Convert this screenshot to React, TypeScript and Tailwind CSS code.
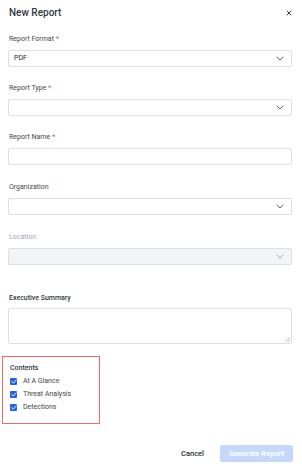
import React from 'react'

function Chevron({ light = false }: { light?: boolean }) {
  return (
    <svg width="8" height="5" viewBox="0 0 8 5" className="shrink-0">
      <path
        d="M1 1 L4 4 L7 1"
        fill="none"
        stroke={light ? '#a0a4ab' : '#4a4f57'}
        strokeWidth="0.9"
        strokeLinecap="round"
        strokeLinejoin="round"
      />
    </svg>
  )
}

function Label({ text, required = false, muted = false }: { text: string; required?: boolean; muted?: boolean }) {
  return (
    <div className={`h-[10px] pl-[1px] text-[7px] leading-[10px] ${muted ? 'text-[#a5a8ad]' : 'text-[#44474d]'}`}>
      {text}
      {required && <span className="ml-[2px] text-[#e5484d]">*</span>}
    </div>
  )
}

function Select({ value = '', disabled = false }: { value?: string; disabled?: boolean }) {
  return (
    <div
      className={`mt-[6px] flex h-[17px] items-center justify-between rounded-[2px] border border-[#dcdfe3] pl-[5px] pr-[7px] text-[7px] text-[#2a2d33] ${
        disabled ? 'bg-[#f3f4f6]' : 'bg-white'
      }`}
    >
      <span>{value}</span>
      <Chevron light={disabled} />
    </div>
  )
}

function Check({ label }: { label: string }) {
  return (
    <div className="flex h-[13px] items-center gap-[6px]">
      <span className="flex h-[7px] w-[7px] items-center justify-center rounded-[1px] bg-[#2563eb]">
        <svg width="6" height="5" viewBox="0 0 6 5">
          <path d="M0.8 2.6 L2.3 4 L5.2 0.9" fill="none" stroke="white" strokeWidth="0.9" strokeLinecap="round" strokeLinejoin="round" />
        </svg>
      </span>
      <span className="text-[7px] text-[#44474d]">{label}</span>
    </div>
  )
}

export default function App() {
  return (
    <div className="h-[468px] w-[302px] bg-white" style={{ fontFamily: 'Roboto, "Noto Sans", sans-serif' }}>
      {/* Header */}
      <div className="flex h-[25px] items-center justify-between pl-[9px] pr-[10px]">
        <h1 className="text-[10px] font-medium text-[#333840]">New Report</h1>
        <svg width="6" height="6" viewBox="0 0 6 6">
          <path d="M1 1 L5 5 M5 1 L1 5" stroke="#3a3e45" strokeWidth="1" strokeLinecap="round" />
        </svg>
      </div>

      <div className="flex flex-col gap-[16px] pl-[8px] pr-[10px] pt-[9px]">
        <div>
          <Label text="Report Format" required />
          <Select value="PDF" />
        </div>

        <div>
          <Label text="Report Type" required />
          <Select />
        </div>

        <div className="mb-[1px]">
          <Label text="Report Name" required />
          <div className="mt-[6px] h-[17px] rounded-[2px] border border-[#dcdfe3] bg-white" />
        </div>

        <div className="mb-[1px]">
          <Label text="Organization" />
          <Select />
        </div>

        <div className="mb-[12px]">
          <Label text="Location" muted />
          <Select disabled />
        </div>

        <div>
          <div className="h-[10px] pl-[1px] text-[7px] font-medium leading-[10px] text-[#333840]">Executive Summary</div>
          <div className="relative mt-[5px] h-[36px] rounded-[2px] border border-[#dcdfe3] bg-white">
            <svg width="5" height="5" viewBox="0 0 5 5" className="absolute bottom-[1px] right-[1px]">
              <path d="M4.5 0.5 L0.5 4.5 M4.5 2.5 L2.5 4.5" stroke="#a0a4ab" strokeWidth="0.7" />
            </svg>
          </div>
        </div>
      </div>

      {/* Contents */}
      <div className="ml-[2px] mt-[12px] h-[68px] w-[98px] border border-[#f06a6a] pl-[7px] pt-[6px]">
        <div className="mb-[2px] h-[10px] text-[7px] font-medium leading-[10px] text-[#333840]">Contents</div>
        <Check label="At A Glance" />
        <Check label="Threat Analysis" />
        <Check label="Detections" />
      </div>

      {/* Footer */}
      <div className="mt-[21px] flex items-center justify-end gap-[16px] pr-[9px]">
        <button className="text-[7.5px] font-medium text-[#2a2d33]">Cancel</button>
        <button className="h-[17px] w-[73px] rounded-[2px] bg-[#c5d8fc] text-[7.5px] font-semibold text-white">
          Generate Report
        </button>
      </div>
    </div>
  )
}
